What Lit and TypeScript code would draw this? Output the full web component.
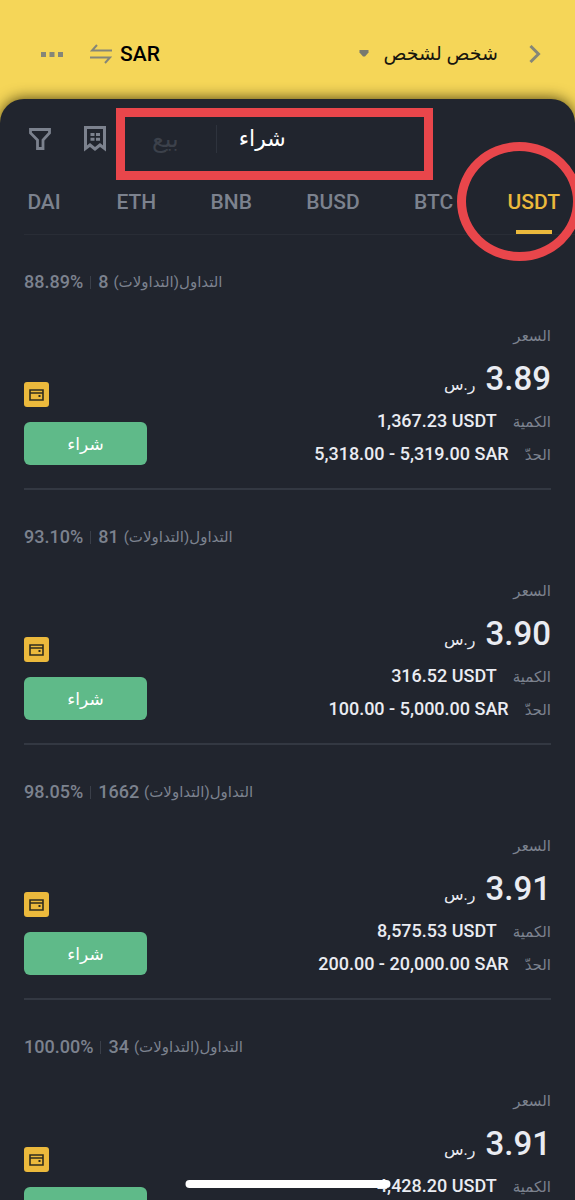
import { LitElement, html, css, svg } from "lit";
import { customElement, property, state } from "lit/decorators.js";

interface Offer {
  trades: string;
  rate: string;
  price: string;
  amount: string;
  limit: string;
}

const OFFERS: Offer[] = [
  { trades: "8", rate: "88.89%", price: "3.89", amount: "1,367.23 USDT", limit: "5,318.00 - 5,319.00 SAR" },
  { trades: "81", rate: "93.10%", price: "3.90", amount: "316.52 USDT", limit: "100.00 - 5,000.00 SAR" },
  { trades: "1662", rate: "98.05%", price: "3.91", amount: "8,575.53 USDT", limit: "200.00 - 20,000.00 SAR" },
  { trades: "34", rate: "100.00%", price: "3.91", amount: "4,428.20 USDT", limit: "" },
];

const COINS = ["USDT", "BTC", "BUSD", "BNB", "ETH", "DAI"];

const walletIcon = svg`<svg width="15" height="12" viewBox="0 0 15 12" fill="none" stroke="#2f2c1e" stroke-width="1.6" aria-hidden="true">
  <path d="M1 1h13v10H1z M1 4h13"/><path d="M9.5 7h2" stroke-width="2"/>
</svg>`;

@customElement("offer-card")
export class OfferCard extends LitElement {
  @property({ attribute: false }) offer!: Offer;

  static styles = css`
    :host {
      display: block;
      padding: 35px 0 18px;
      border-bottom: 2px solid #333842;
    }
    .stats {
      display: flex;
      justify-content: flex-end;
      align-items: center;
      gap: 7px;
      height: 24px;
      line-height: 24px;
      font-size: 18px;
      font-weight: 500;
      color: #7c828e;
    }
    .trades {
      display: flex;
      gap: 5px;
    }
    .bar {
      width: 1px;
      height: 13px;
      background: #3a3f49;
    }
    .ar {
      font-size: 15px;
      font-weight: 400;
    }
    .body {
      display: flex;
      justify-content: space-between;
      align-items: flex-end;
      margin-top: 28px;
    }
    dl {
      margin: 0;
    }
    .row {
      display: flex;
      align-items: baseline;
      gap: 16px;
      height: 33px;
      line-height: 33px;
    }
    .head {
      display: block;
      line-height: 28px;
    }
    dt {
      font-size: 15px;
      color: #7c828e;
    }
    dd {
      margin: 0;
      font-size: 18px;
      font-weight: 500;
      color: #eaecf2;
    }
    .price {
      display: flex;
      align-items: baseline;
      gap: 10px;
      height: 54px;
      line-height: 58px;
    }
    .num {
      font-size: 33px;
    }
    .price .ar {
      font-size: 16px;
    }
    .action {
      display: flex;
      flex-direction: column;
      align-items: flex-end;
      gap: 15px;
      padding-bottom: 5px;
    }
    .pay {
      display: flex;
      align-items: center;
      justify-content: center;
      width: 25px;
      height: 25px;
      border-radius: 3px;
      background: #ebb93c;
    }
    button {
      width: 123px;
      height: 43px;
      padding: 0;
      border: 0;
      border-radius: 6px;
      background: #5fba89;
      color: #fff;
      font: 17px/40px "DejaVu Sans", sans-serif;
    }
  `;

  render() {
    const o = this.offer;
    return html`
      <div class="stats">
        <span class="trades"><span class="ar">التداول(التداولات)</span><span>${o.trades}</span></span>
        <span class="bar"></span>
        <span dir="ltr">${o.rate}</span>
      </div>
      <div class="body">
        <dl>
          <div class="head">
            <dt>السعر</dt>
            <dd class="price"><span class="num">${o.price}</span><span class="ar">ر.س</span></dd>
          </div>
          <div class="row"><dt>الكمية</dt><dd dir="ltr">${o.amount}</dd></div>
          <div class="row">${o.limit ? html`<dt>الحدّ</dt><dd dir="ltr">${o.limit}</dd>` : ""}</div>
        </dl>
        <div class="action">
          <span class="pay">${walletIcon}</span>
          <button type="button">شراء</button>
        </div>
      </div>
    `;
  }
}

@customElement("app-root")
export class AppRoot extends LitElement {
  @state() private coin = "USDT";

  static styles = css`
    :host {
      display: flex;
      flex-direction: column;
      position: relative;
      height: 100vh;
      overflow: hidden;
      background: #f5d658;
      font-family: Roboto, "DejaVu Sans", sans-serif;
    }
    button {
      padding: 0;
      border: 0;
      background: none;
      color: inherit;
      font: inherit;
    }
    svg {
      display: block;
    }
    header {
      display: flex;
      align-items: center;
      padding: 40px 34px 31px 41px;
      height: 28px;
      line-height: 28px;
      color: #17160f;
    }
    .title {
      display: flex;
      align-items: center;
      gap: 15px;
      margin-inline-start: 31px;
      font-size: 19px;
    }
    .title svg {
      margin-bottom: 2px;
    }
    .currency {
      display: flex;
      align-items: center;
      gap: 8px;
      margin-inline: auto 27px;
      font-size: 21px;
      font-weight: 500;
      color: #000;
    }
    main {
      position: relative;
      flex: 1;
      min-height: 0;
      display: flex;
      flex-direction: column;
      border-radius: 24px 24px 0 0;
      background: #21252e;
      box-shadow: 0 -1px 14px rgba(40, 34, 0, 0.75);
    }
    .tools {
      display: flex;
      align-items: center;
      padding: 20px 24px 0 29px;
      height: 40px;
    }
    .sides {
      display: flex;
      align-items: center;
      margin-inline: auto 46px;
      line-height: 36px;
      color: #3c414b;
      font-size: 22px;
    }
    .sides .on {
      color: #fff;
    }
    .split {
      width: 1px;
      height: 28px;
      margin-inline: 22px 37px;
      background: #2e333d;
    }
    .sides .off {
      font-size: 24px;
    }
    .icons {
      display: flex;
      align-items: center;
      gap: 33px;
    }
    .tabs {
      display: flex;
      justify-content: space-between;
      margin-left: 24px;
      padding: 29px 15px 0 2px;
      border-bottom: 1px solid #292d36;
      font-size: 21px;
      font-weight: 500;
      line-height: 28px;
      color: #7c828e;
    }
    .tab {
      display: flex;
      flex-direction: column;
      align-items: center;
      gap: 14px;
    }
    .tab::after {
      content: "";
      width: 36px;
      height: 4px;
    }
    .tab.on {
      color: #ebb93c;
    }
    .tab.on::after {
      background: #ebb93c;
    }
    .list {
      flex: 1;
      min-height: 0;
      overflow-y: auto;
      scrollbar-width: none;
      padding: 0 24px;
    }
    .mark {
      position: absolute;
      box-sizing: border-box;
      border: 9px solid #e9464b;
      pointer-events: none;
    }
    .box {
      top: 9px;
      left: 116px;
      right: 142px;
      height: 72px;
    }
    .ring {
      top: 43px;
      right: -7px;
      width: 125px;
      height: 119px;
      border-radius: 50%;
    }
    .home {
      position: absolute;
      bottom: 12px;
      left: 50%;
      width: 205px;
      height: 8px;
      transform: translateX(-50%);
      border-radius: 4px;
      background: #fff;
    }
  `;

  connectedCallback() {
    super.connectedCallback();
    this.dir = "rtl";
    this.lang = "ar";
  }

  render() {
    return html`
      <header>
        <button type="button" aria-label="رجوع">
          <svg width="12" height="18" viewBox="0 0 12 18" fill="none" stroke="#858678" stroke-width="3"><path d="M1.5 1l8 8-8 8"/></svg>
        </button>
        <button type="button" class="title">
          شخص لشخص
          <svg width="10" height="8" viewBox="0 0 10 8" fill="#77796f"><path d="M.5 1h9v2.500L6 7.500H4L.5 3.500z"/></svg>
        </button>
        <button type="button" class="currency">
          SAR
          <svg width="22" height="20" viewBox="0 0 22 20" fill="none" stroke="#858678" stroke-width="2"><path d="M22 6.500H2L7 1M0 13.500h20L15 19"/></svg>
        </button>
        <button type="button" aria-label="المزيد">
          <svg width="22" height="5" viewBox="0 0 22 5" fill="#858678"><path d="M0 0h5v5H0zM8.500 0h5v5h-5zM17 0h5v5h-5z"/></svg>
        </button>
      </header>
      <main>
        <div class="tools">
          <div class="sides">
            <button type="button" class="on">شراء</button>
            <span class="split"></span>
            <button type="button" class="off">بيع</button>
          </div>
          <div class="icons">
            <button type="button" aria-label="الطلبات">
              <svg width="22" height="26" viewBox="0 0 22 26" fill="none" stroke="#7c828e" stroke-width="3">
                <path d="M1.500 22.500v-21h19v21l-4.500-3.500-5 4-5-4z"/>
                <path d="M6.500 8.500h4M12 8.500h4M6.500 13.200h4M12 13.200h4"/>
              </svg>
            </button>
            <button type="button" aria-label="تصفية">
              <svg width="22" height="22" viewBox="0 0 22 22" fill="none" stroke="#7c828e" stroke-width="2.800">
                <path d="M1.500 1.500h19v3.500l-6.500 7v8.500H8.500V12l-7-7z"/>
              </svg>
            </button>
          </div>
        </div>
        <nav class="tabs">
          ${COINS.map(
            (c) => html`<button type="button" class="tab ${c === this.coin ? "on" : ""}" @click=${() => (this.coin = c)}>${c}</button>`
          )}
        </nav>
        <div class="list">${OFFERS.map((o) => html`<offer-card .offer=${o}></offer-card>`)}</div>
        <div class="mark box"></div>
        <div class="mark ring"></div>
      </main>
      <div class="home"></div>
    `;
  }
}
